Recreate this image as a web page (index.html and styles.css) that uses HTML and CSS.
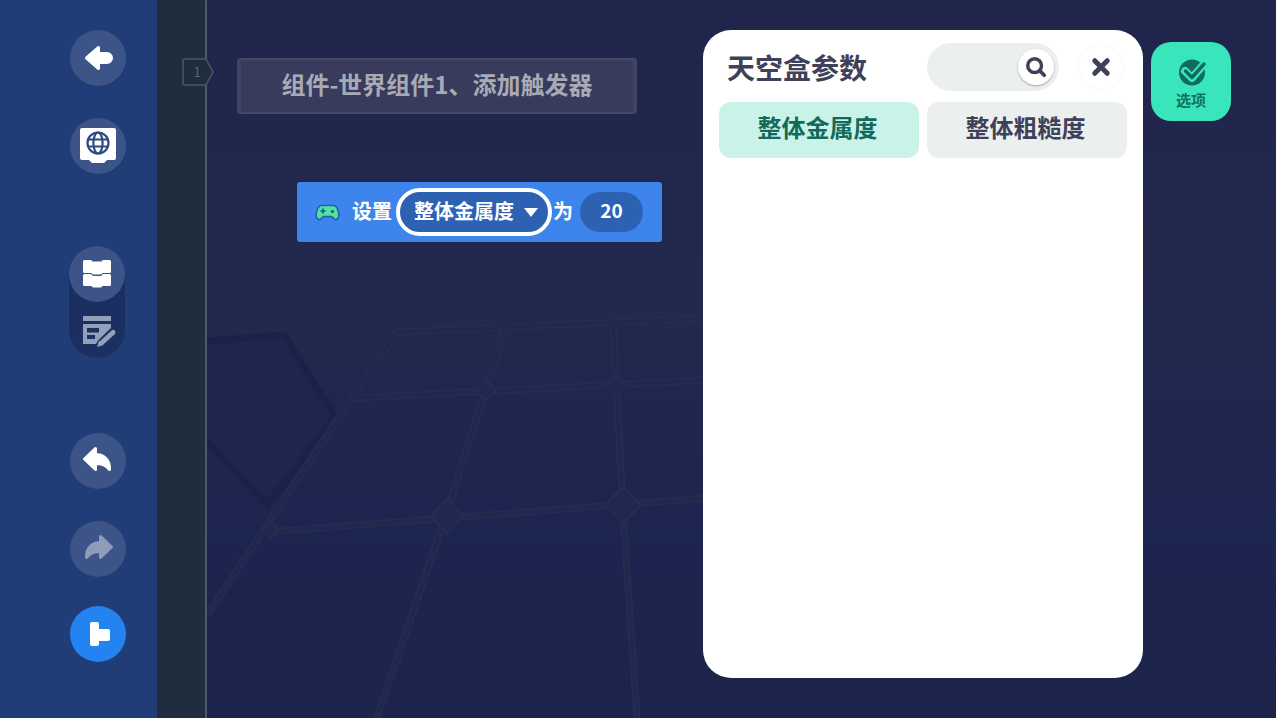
FILE: index.html
```html
<!DOCTYPE html>
<html lang="zh-CN">
<head>
    <meta charset="UTF-8">
    <meta name="viewport" content="width=device-width, initial-scale=1.0">
    <title>天空盒参数</title>
    <link rel="stylesheet" href="styles.css">
</head>
<body>
    <div class="sidebar">
        <div class="side-btn btn-back">
            <svg viewBox="0 0 56 56"><path fill="#fff" stroke="#fff" stroke-width="3" stroke-linejoin="round" d="M16.500 28 L28.500 17.500 V23.500 H37 a4.500 4.500 0 0 1 0 9 H28.500 V38.500 Z"/></svg>
        </div>
        <div class="side-btn btn-world">
            <svg viewBox="0 0 56 56">
                <path fill="#fff" d="M12 10 H44 a2 2 0 0 1 2 2 V40 a2 2 0 0 1 -2 2 H37 l-3 3 H22 l-3 -3 H12 a2 2 0 0 1 -2 -2 V12 a2 2 0 0 1 2 -2 Z"/>
                <g fill="none" stroke="#2c4a80" stroke-width="2.200">
                    <circle cx="28" cy="25" r="10.500"/>
                    <ellipse cx="28" cy="25" rx="4.600" ry="10.500"/>
                    <path d="M17.500 21.500 H38.500 M17.500 28.500 H38.500"/>
                </g>
            </svg>
        </div>
        <div class="side-stack">
            <div class="side-btn stack-on">
                <svg viewBox="0 0 56 56"><path fill="#fff" d="M15.500 14 H22 l1.500 1.500 H32.500 l1.500 -1.500 H40.500 a1.500 1.500 0 0 1 1.500 1.500 V25.500 a1.500 1.500 0 0 1 -1.500 1.500 H33.500 l-1.500 1.500 H24 l-1.500 -1.500 H15.500 a1.500 1.500 0 0 1 -1.500 -1.500 V15.500 a1.500 1.500 0 0 1 1.500 -1.500 Z M15.500 28 H22 l2 2 H32 l2 -2 H40.500 a1.500 1.500 0 0 1 1.500 1.500 V38.500 a1.500 1.500 0 0 1 -1.500 1.500 H33.500 l-1.500 1.500 H24 l-1.500 -1.500 H15.500 a1.500 1.500 0 0 1 -1.500 -1.500 V29.500 a1.500 1.500 0 0 1 1.500 -1.500 Z"/></svg>
            </div>
            <div class="stack-off">
                <svg viewBox="0 0 56 56">
                    <path fill="#949fb8" d="M14 14 H42 V19 H14 Z M14 22 H42 V26 L29 38.500 L27 42 H14 Z"/>
                    <path fill="#1b2f60" d="M18 26 H30 V30.500 H18 Z M18 33 H26 V37 H18 Z"/>
                    <path stroke="#949fb8" stroke-width="5" stroke-linecap="round" d="M44 30.500 L33 40.500"/>
                    <path fill="#949fb8" d="M30 38.500 L34.500 43 L28 45 Z"/>
                </svg>
            </div>
        </div>
        <div class="side-btn btn-undo">
            <svg viewBox="0 0 56 56"><path fill="#fff" stroke="#fff" stroke-width="3" stroke-linejoin="round" d="M14.500 26 L25.500 15.500 V21.500 C34 21.500 40 27 39.500 36.500 C36 32 32 30.500 25.500 30.500 V36.500 Z"/></svg>
        </div>
        <div class="side-btn btn-redo">
            <svg viewBox="0 0 56 56"><path fill="#8f9cb9" stroke="#8f9cb9" stroke-width="3" stroke-linejoin="round" d="M41.500 26 L30.500 15.500 V21.500 C22 21.500 16 27 16.500 36.500 C20 32 24 30.500 30.500 30.500 V36.500 Z"/></svg>
        </div>
        <div class="side-btn btn-play">
            <svg viewBox="0 0 56 56"><path fill="#fff" d="M22 16 H27 a2 2 0 0 1 2 2 V23 H38 a2 2 0 0 1 2 2 V33 a2 2 0 0 1 -2 2 H29 V38 a2 2 0 0 1 -2 2 H22 a2 2 0 0 1 -2 -2 V18 a2 2 0 0 1 2 -2 Z"/></svg>
        </div>
    </div>

    <div class="gutter">
        <svg class="line-tag" viewBox="0 0 33 28">
            <path fill="#1f2d3f" stroke="#4a5866" stroke-width="1.500" d="M3 1 H24 L31 14 L24 27 H3 a2 2 0 0 1 -2 -2 V3 a2 2 0 0 1 2 -2 Z"/>
            <text x="15" y="19" class="line-num">1</text>
        </svg>
    </div>

    <div class="canvas">
        <!-- faint floor picture behind the blocks -->
        <svg class="floor" viewBox="0 0 1069 718" preserveAspectRatio="none">
            <path class="diamond-fill" d="M0 341 L77 335 L128 417 L60 505 L0 441 Z"/>
            <path class="diamond" d="M0 341 L77 335 L128 417 L60 505 L0 441"/>
            <g class="grid-wide">
                <path d="M190 332 L500 318 M148 398 L500 380 M60 532 L500 498 M190 332 L140 405 L0 615"/>
                <path d="M298 328 L240 512 L170 718 M406 320 L416 512 L430 718"/>
            </g>
            <g class="grid-thin">
                <path d="M190 332 L500 318 M148 398 L500 380 M60 532 L500 498 M190 332 L140 405 L0 615"/>
                <path d="M298 328 L240 512 L170 718 M406 320 L416 512 L430 718"/>
            </g>
            <g class="grid-joint">
                <path d="M269 390 L279 380 L289 390 L279 400 Z"/>
                <path d="M399 385 L409 375 L419 385 L409 395 Z"/>
                <path d="M224 516 L240 498 L256 516 L240 534 Z"/>
                <path d="M398 505 L416 487 L434 505 L416 523 Z"/>
                <path d="M55 530 L63 520 L71 530 L63 540 Z"/>
            </g>
        </svg>

        <div class="comment">组件-世界组件1、添加触发器</div>

        <div class="block">
            <svg class="pad" viewBox="0 0 25 17">
                <path fill="#4fe3a0" stroke="#2a5fa8" stroke-width="1.600" d="M6.500 1.500 H18.500 C21.500 1.500 23 5 23.800 10 C24.300 14 21.500 16.500 19.500 15.200 L16.500 12.500 H8.500 L5.500 15.200 C3.500 16.500 .7 14 1.200 10 C2 5 3.500 1.500 6.500 1.500 Z"/>
                <path stroke="#1f4f96" stroke-width="1.600" d="M5.500 7 H10.500 M8 4.500 V9.500"/>
                <circle cx="17.500" cy="7.500" r="1.600" fill="#1f4f96"/>
            </svg>
            <span class="block-word">设置</span>
            <div class="block-select">
                <span>整体金属度</span>
                <i class="caret"></i>
            </div>
            <span class="block-word">为</span>
            <div class="block-value">20</div>
        </div>

        <div class="overlay">
            <div class="panel">
                <div class="panel-head">
                    <h1>天空盒参数</h1>
                    <div class="search">
                        <div class="search-btn">
                            <svg viewBox="0 0 24 24"><circle cx="10.500" cy="10.500" r="7.500" fill="none" stroke="#3e4159" stroke-width="3.800"/><path d="M16 16 L21 21" stroke="#3e4159" stroke-width="4" stroke-linecap="round"/></svg>
                        </div>
                    </div>
                    <div class="close-btn">
                        <svg viewBox="0 0 24 24"><path d="M4.500 4.500 L19.500 19.500 M19.500 4.500 L4.500 19.500" stroke="#3e4159" stroke-width="6" stroke-linecap="round"/></svg>
                    </div>
                </div>
                <div class="tabs">
                    <div class="tab tab-on">整体金属度</div>
                    <div class="tab">整体粗糙度</div>
                </div>
            </div>
            <div class="option-tab">
                <svg viewBox="0 0 30 28">
                    <circle cx="14" cy="14.500" r="13" fill="#0f6b5f"/>
                    <path d="M7 13 L14 20 L26 6" fill="none" stroke="#39e6bb" stroke-width="8" stroke-linecap="round" stroke-linejoin="round"/>
                    <path d="M7.500 13 L14 19.500 L26 6" fill="none" stroke="#0f6b5f" stroke-width="3.500" stroke-linecap="round" stroke-linejoin="round"/>
                </svg>
                <span>选项</span>
            </div>
        </div>
    </div>
</body>
</html>
```

FILE: styles.css
```css
* {
    box-sizing: border-box;
}

body {
    margin: 0;
    height: 718px;
    display: flex;
    overflow: hidden;
    font-family: "Noto Sans CJK SC", "Noto Sans", sans-serif;
    background-color: #1e254b;
}

svg {
    display: block;
}

/* left tool column */
.sidebar {
    width: 157px;
    flex: none;
    display: flex;
    flex-direction: column;
    align-items: flex-start;
    padding: 30px 0 0 70px;
    background-color: #203d77;
}

.side-btn {
    width: 56px;
    height: 56px;
    border-radius: 50%;
    background-color: #3c5487;
}

.btn-world {
    margin-top: 32px;
}

.side-stack {
    margin: 72px 0 0 -1px;
    width: 56px;
    height: 112px;
    border-radius: 28px;
    background-color: #1b2f60;
}

.btn-undo {
    margin-top: 75px;
}

.btn-redo {
    margin-top: 32px;
}

.btn-play {
    margin-top: 29px;
    background-color: #2383f0;
}

/* line number strip */
.gutter {
    width: 50px;
    flex: none;
    position: relative;
    z-index: 2;
    background-color: #1f2d3f;
    border-right: 2px solid #4a5a6c;
}

.line-tag {
    position: absolute;
    left: 25px;
    top: 58px;
    width: 33px;
    height: 28px;
}

.line-num {
    font-size: 13px;
    fill: #5a6672;
    text-anchor: middle;
}

/* block workspace */
.canvas {
    flex: 1;
    position: relative;
    background: linear-gradient(180deg, #1f254b 0%, #22294d 42%, #1c2450 75%, #1d244b 100%);
}

.floor {
    position: absolute;
    left: 0;
    top: 0;
    width: 1069px;
    height: 718px;
    fill: none;
}

.diamond {
    stroke: #1c2148;
    stroke-width: 7;
}

.diamond-fill {
    fill: #1e2650;
}

.grid-wide {
    stroke: #2a2b50;
    stroke-width: 7;
}

.grid-thin {
    stroke: #1f294f;
    stroke-width: 4;
}

.grid-joint {
    fill: #1f294f;
    stroke: #2a2b50;
    stroke-width: 2;
}

.comment {
    position: absolute;
    left: 30px;
    top: 58px;
    width: 400px;
    height: 56px;
    display: flex;
    align-items: center;
    justify-content: center;
    padding-bottom: 5px;
    font-size: 24px;
    font-weight: 700;
    color: #a8abb5;
    background-color: #383b5c;
    border: 2px solid #45486a;
    border-left: 4px solid #404364;
    border-right: 4px solid #404364;
    border-radius: 3px;
}

.block {
    position: absolute;
    left: 90px;
    top: 182px;
    width: 365px;
    height: 60px;
    display: flex;
    align-items: center;
    padding-left: 18px;
    color: #fff;
    font-size: 20px;
    font-weight: 700;
    background-color: #3d85ec;
    border-radius: 3px;
}

.block-word {
    padding-bottom: 3px;
}

.pad {
    width: 25px;
    height: 17px;
    margin-right: 12px;
}

.block-select {
    width: 156px;
    height: 48px;
    margin: 0 1px 0 4px;
    display: flex;
    align-items: center;
    padding: 0 0 3px 14px;
    border: 4px solid #fff;
    border-radius: 24px;
    background-color: #2d62b3;
}

.caret {
    margin: 4px 0 0 10px;
    border-left: 7px solid transparent;
    border-right: 7px solid transparent;
    border-top: 9px solid #fff;
}

.block-value {
    width: 63px;
    height: 40px;
    margin-left: 7px;
    border-radius: 20px;
    text-align: center;
    line-height: 36px;
    font-size: 19px;
    background-color: #2d62b3;
}

/* panel on top of the workspace */
.overlay {
    position: absolute;
    left: 496px;
    top: 30px;
    display: flex;
    align-items: flex-start;
    gap: 8px;
}

.panel {
    width: 440px;
    height: 648px;
    padding: 13px 16px 0;
    border-radius: 28px;
    background-color: #fff;
}

.panel-head {
    display: flex;
    align-items: center;
    height: 48px;
    margin-bottom: 11px;
}

.panel-head h1 {
    margin: 0 0 0 8px;
    width: 200px;
    font-size: 28px;
    font-weight: 700;
    color: #3e4159;
}

.search {
    width: 132px;
    height: 48px;
    display: flex;
    align-items: center;
    justify-content: flex-end;
    padding-right: 5px;
    border-radius: 24px;
    background-color: #ebf0ee;
}

.search-btn {
    width: 36px;
    height: 36px;
    padding: 7px;
    border-radius: 50%;
    background-color: #fff;
    box-shadow: 0 1px 2px rgba(0, 0, 0, 0.3);
}

.close-btn {
    width: 44px;
    height: 44px;
    margin-left: 20px;
    padding: 12px;
    border-radius: 50%;
    background-color: #fff;
    box-shadow: 0 0 2px rgba(0, 0, 0, 0.08);
}

.tabs {
    display: flex;
    gap: 8px;
}

.tab {
    width: 200px;
    height: 56px;
    padding-right: 3px;
    border-radius: 12px;
    text-align: center;
    line-height: 50px;
    font-size: 24px;
    font-weight: 700;
    color: #3e4159;
    background-color: #ebf0ee;
}

.tab-on {
    color: #116a5c;
    background-color: #c9f3e8;
}

.option-tab {
    width: 80px;
    height: 79px;
    margin-top: 12px;
    padding-top: 16px;
    display: flex;
    flex-direction: column;
    align-items: center;
    border-radius: 20px;
    font-size: 15px;
    font-weight: 700;
    color: #137060;
    background-color: #39e6bb;
}

.option-tab svg {
    width: 30px;
    height: 28px;
    margin-left: 3px;
}

.option-tab span {
    line-height: 22px;
    margin-top: 3px;
}
```
